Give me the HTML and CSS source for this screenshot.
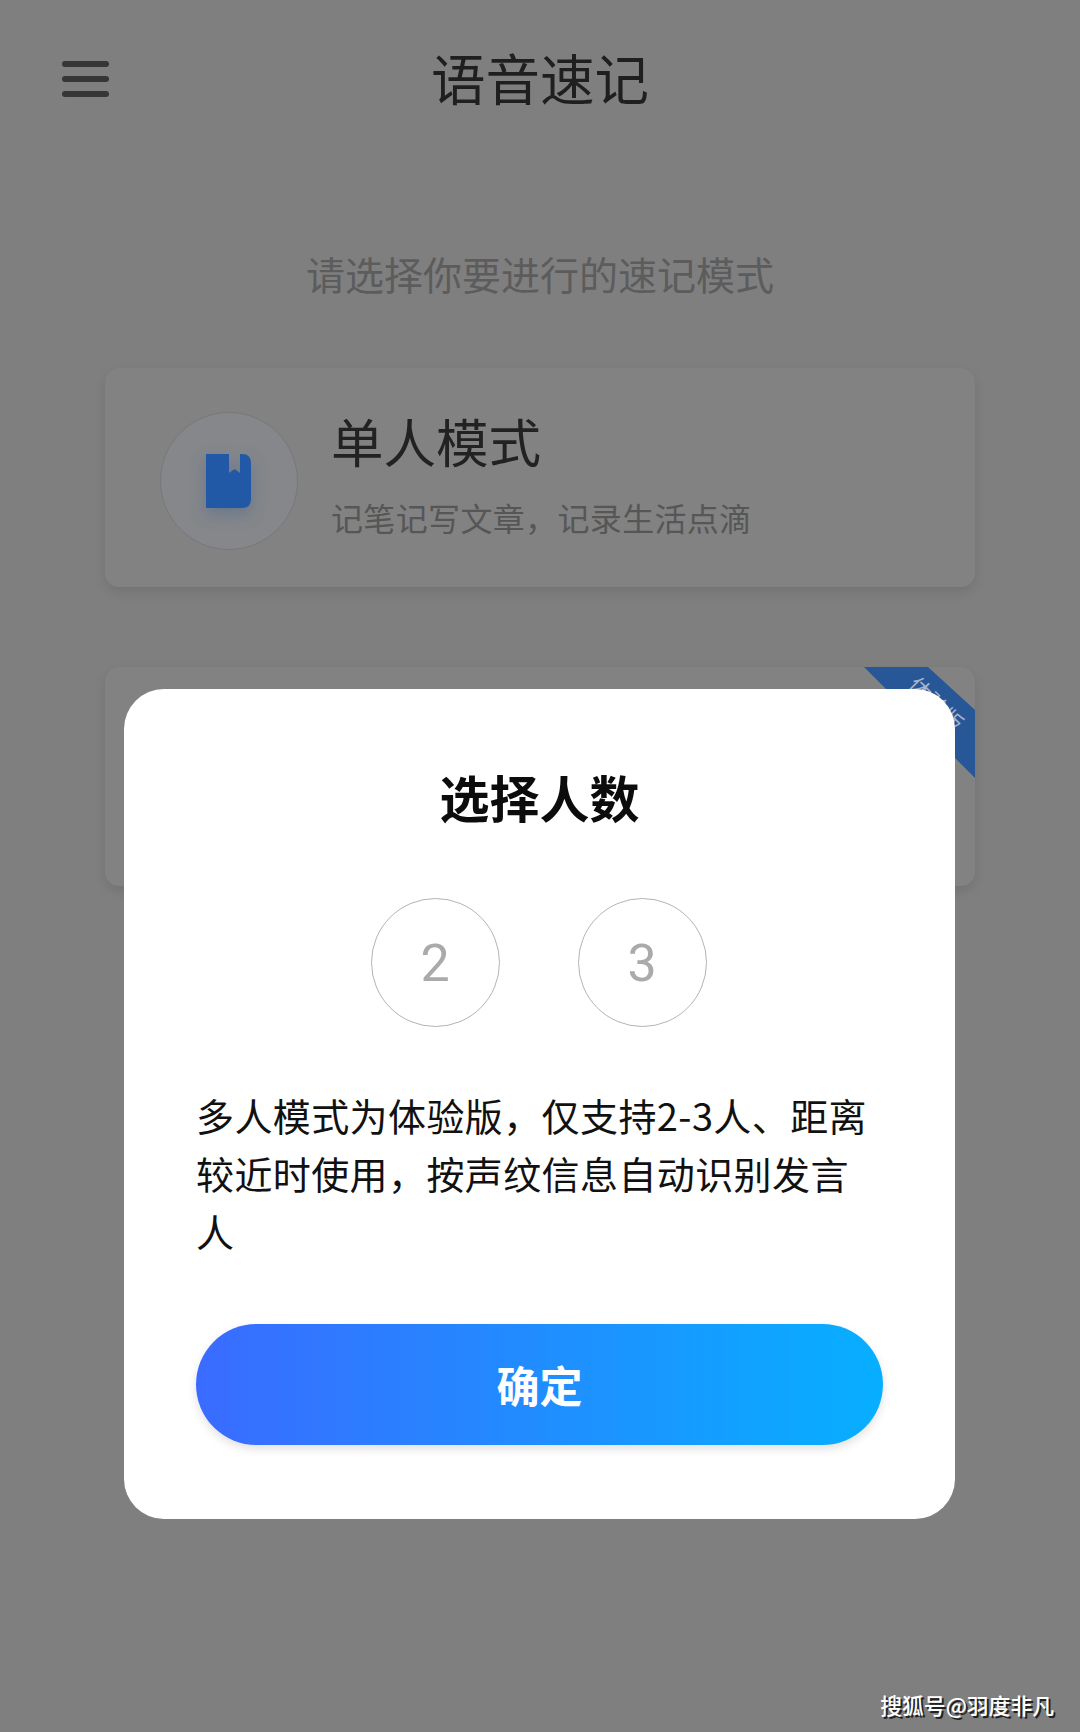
FILE: index.html
```html
<!DOCTYPE html>
<html lang="zh-CN">
<head>
  <meta charset="UTF-8">
  <meta name="viewport" content="width=device-width, initial-scale=1.0">
  <link rel="stylesheet" href="styles.css">
  <title>语音速记</title>
</head>
<body>

  <div class="header">
    <div class="menu-icon">
      <span></span>
      <span></span>
      <span></span>
    </div>
    <h1>语音速记</h1>
  </div>

  <p class="hint">请选择你要进行的速记模式</p>

  <div class="card">
    <div class="card-icon">
      <svg width="45" height="54" viewBox="0 0 45 54">
        <path fill="#2159a6" d="M0 0H23V19L28.5 15L34 19V0H36Q45 0 45 9V45Q45 54 36 54H0Z"/>
      </svg>
    </div>
    <div class="card-text">
      <h2>单人模式</h2>
      <p>记笔记写文章，记录生活点滴</p>
    </div>
  </div>

  <div class="card card-multi">
    <div class="ribbon"><span>体验版</span></div>
  </div>

  <div class="modal">
    <h3>选择人数</h3>
    <div class="choices">
      <div class="choice">2</div>
      <div class="choice">3</div>
    </div>
    <p class="note">多人模式为体验版，仅支持2-3人、距离较近时使用，按声纹信息自动识别发言人</p>
    <button class="confirm">确定</button>
  </div>

  <div class="watermark">搜狐号@羽度非凡</div>

</body>
</html>
```

FILE: styles.css
```css
html, body {
  height: 100%;
}

body {
  margin: 0;
  background: #7f7f7f;
  font-family: "Noto Sans CJK SC", "Noto Sans", sans-serif;
  overflow: hidden;
  position: relative;
}

h1, h2, h3, p {
  margin: 0;
  font-weight: 400;
}

.header {
  height: 154px;
  display: grid;
  grid-template-columns: 1fr auto 1fr;
  align-items: center;
  padding: 0 62px;
}

.menu-icon {
  width: 47px;
  margin-top: 4px;
  display: flex;
  flex-direction: column;
  gap: 9px;
}

.menu-icon span {
  height: 6px;
  border-radius: 3px;
  background: #363636;
}

h1 {
  font-size: 54.5px;
  line-height: 60px;
  color: #1f1f1f;
}

.hint {
  margin-top: 94px;
  text-align: center;
  font-size: 39px;
  line-height: 50px;
  color: #5c5c5c;
}

.card {
  position: relative;
  box-sizing: border-box;
  height: 219px;
  margin: 70px 105px 0;
  padding: 44px 55px 0;
  display: flex;
  gap: 33px;
  background: #828282;
  border-radius: 14px;
  box-shadow: 0 5px 12px rgba(0, 0, 0, .1);
}

.card-multi {
  margin-top: 80px;
}

.card-icon {
  box-sizing: border-box;
  width: 138px;
  height: 138px;
  display: flex;
  align-items: center;
  justify-content: center;
  background: #85878a;
  border: 1px solid #787878;
  border-radius: 50%;
}

.card-icon svg {
  margin-right: 2px;
  filter: drop-shadow(0 6px 8px rgba(40, 80, 150, .3));
}

.card-text {
  margin-top: -2px;
}

.card-text h2 {
  font-size: 52.5px;
  line-height: 60px;
  color: #222;
}

.card-text p {
  margin-top: 25px;
  font-size: 32px;
  line-height: 44px;
  letter-spacing: .35px;
  color: #565656;
}

.ribbon {
  position: absolute;
  top: 0;
  right: 0;
  width: 111px;
  height: 111px;
  background: #285798;
  clip-path: polygon(0 0, 64px 0, 111px 43px, 111px 111px);
}

.ribbon span {
  position: absolute;
  left: 40px;
  top: 22px;
  width: 66px;
  text-align: center;
  font-size: 22px;
  line-height: 28px;
  color: #a9b4c6;
  transform: rotate(45deg);
}

.modal {
  position: absolute;
  top: 689px;
  left: 124px;
  box-sizing: border-box;
  width: 831px;
  height: 830px;
  padding: 77px 72px 74px;
  background: #fff;
  border-radius: 40px;
}

.modal h3 {
  text-align: center;
  font-size: 50px;
  font-weight: 700;
  line-height: 60px;
  color: #0c0c0c;
}

.choices {
  margin: 72px 2px 0 0;
  display: flex;
  justify-content: center;
  gap: 78px;
}

.choice {
  box-sizing: border-box;
  width: 129px;
  height: 129px;
  padding-top: 2px;
  display: flex;
  align-items: center;
  justify-content: center;
  border: 1px solid #b4b4b4;
  border-radius: 50%;
  font-family: Roboto, sans-serif;
  font-size: 52px;
  color: #aaa;
}

.note {
  margin-top: 59px;
  max-width: 684px;
  font-size: 38px;
  line-height: 58px;
  letter-spacing: .4px;
  color: #111;
}

.confirm {
  display: block;
  width: 100%;
  height: 121px;
  margin-top: 64px;
  padding-bottom: 3px;
  border: 0;
  border-radius: 61px;
  background: linear-gradient(90deg, #3a6bff, #07afff);
  box-shadow: 0 4px 10px rgba(0, 0, 0, .12);
  font-family: inherit;
  font-size: 43px;
  font-weight: 700;
  color: #fff;
}

.watermark {
  position: absolute;
  right: 26px;
  bottom: 12px;
  font-size: 21.8px;
  line-height: 30px;
  font-weight: 500;
  color: #fff;
  text-shadow: 2px 2px 0 #222;
}
```
